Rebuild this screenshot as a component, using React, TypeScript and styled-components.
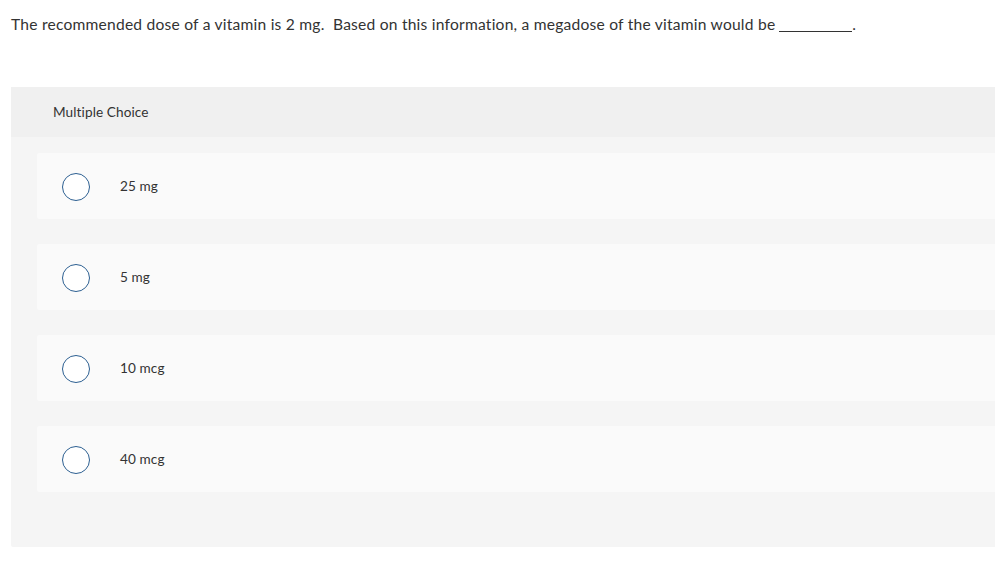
import React from "react";
import styled, { createGlobalStyle } from "styled-components";

const GlobalStyle = createGlobalStyle`
  html, body {
    margin: 0;
    padding: 0;
    background: #ffffff;
  }
  body {
    font-family: Lato, "Liberation Sans", sans-serif;
    color: #333333;
  }
`;

const Page = styled.div`
  padding: 15px 0 0 11px;
  width: 984px;
`;

const Question = styled.p`
  margin: 0;
  font-size: 15.6px;
  line-height: 19px;
  letter-spacing: 0.22px;
  color: #333333;
`;

const Blank = styled.span`
  display: inline-block;
  width: 73px;
  border-bottom: 1px solid #333333;
  margin-left: 4px;
  vertical-align: -2px;
`;

const Panel = styled.section`
  margin-top: 53px;
  background: #f5f5f5;
  border-radius: 2px 0 0 2px;
  padding-bottom: 55px;
`;

const PanelHeader = styled.header`
  height: 50px;
  display: flex;
  align-items: center;
  padding-left: 42px;
  background: #f0f0f0;
  font-size: 13.6px;
  letter-spacing: 0.1px;
  color: #333333;
`;

const Choices = styled.ul`
  list-style: none;
  margin: 0;
  padding: 16px 0 0 26px;
  display: flex;
  flex-direction: column;
  gap: 25px;
`;

const Choice = styled.li`
  height: 66px;
  display: flex;
  align-items: center;
  background: #fafafa;
  border-radius: 2px 0 0 2px;
  padding-left: 25px;
  font-size: 13.6px;
  letter-spacing: 0.1px;
  color: #333333;
`;

const Radio = styled.span`
  width: 26px;
  height: 26px;
  border: 1.3px solid #2c5f91;
  border-radius: 50%;
  background: #ffffff;
  flex-shrink: 0;
  margin-right: 30px;
  margin-top: 2px;
`;

const choices = ["25 mg", "5 mg", "10 mcg", "40 mcg"];

const App: React.FC = () => (
  <>
    <GlobalStyle />
    <Page>
      <Question>
        The recommended dose of a vitamin is 2 mg.&nbsp; Based on this
        information, a megadose of the vitamin would be
        <Blank />.
      </Question>
      <Panel>
        <PanelHeader>Multiple Choice</PanelHeader>
        <Choices>
          {choices.map((c) => (
            <Choice key={c}>
              <Radio />
              {c}
            </Choice>
          ))}
        </Choices>
      </Panel>
    </Page>
  </>
);

export default App;
